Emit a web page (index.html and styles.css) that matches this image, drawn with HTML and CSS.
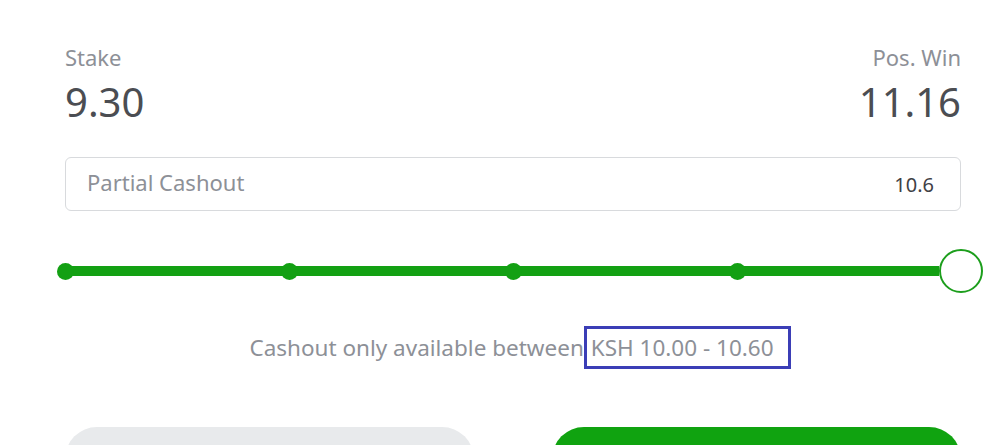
FILE: index.html
```
<!DOCTYPE html>
<html lang="en">

<head>
    <meta charset="UTF-8">
    <title>Partial Cashout</title>
    <link rel="stylesheet" href="styles.css">
</head>

<body>
    <div class="cashout">
        <div class="summary">
            <div class="col">
                <div class="label">Stake</div>
                <div class="amount">9.30</div>
            </div>
            <div class="col right">
                <div class="label">Pos. Win</div>
                <div class="amount">11.16</div>
            </div>
        </div>

        <div class="field">
            <span class="placeholder">Partial Cashout</span>
            <span class="value">10.6</span>
        </div>

        <div class="slider">
            <span class="stop"><i class="dot"></i></span>
            <span class="stop"><i class="dot"></i></span>
            <span class="stop"><i class="dot"></i></span>
            <span class="stop"><i class="dot"></i></span>
            <span class="stop"><i class="handle"></i></span>
        </div>

        <p class="hint">Cashout only available between<span class="range"> KSH 10.00 - 10.60</span></p>

        <div class="actions">
            <button class="btn cancel"></button>
            <button class="btn confirm"></button>
        </div>
    </div>
</body>
</html>
```

FILE: styles.css
```
* {
    padding: 0;
    margin: 0;
    box-sizing: border-box;
}

body {
    background: #fff;
    font-family: "Noto Sans", "Open Sans", sans-serif;
    overflow: hidden;
}

.cashout {
    width: 896px;
    margin-left: 65px;
    padding-top: 40px;
}

.summary {
    display: flex;
    justify-content: space-between;
}

.col.right {
    text-align: right;
}

.label {
    font-size: 22px;
    line-height: 34px;
    color: #8d9097;
}

.amount {
    font-size: 40px;
    line-height: 56px;
    color: #4b4d52;
}

.field {
    margin-top: 27px;
    height: 54px;
    border: 1px solid #d8dadd;
    border-radius: 6px;
    display: flex;
    justify-content: space-between;
    align-items: center;
    padding: 0 26px 4px 21px;
}

.placeholder {
    font-size: 22px;
    color: #8d9097;
}

.value {
    font-size: 20px;
    color: #3f4146;
    padding-top: 4px;
}

.slider {
    margin-top: 38px;
    height: 44px;
    display: flex;
    justify-content: space-between;
    align-items: center;
    background: linear-gradient(#13a013, #13a013) no-repeat left center / calc(100% - 22px) 10px;
}

.stop {
    width: 0;
    display: flex;
    justify-content: center;
}

.dot {
    flex: none;
    width: 17px;
    height: 17px;
    border-radius: 50%;
    background: #13a013;
}

.handle {
    flex: none;
    width: 44px;
    height: 44px;
    border-radius: 50%;
    background: #fff;
    border: 2px solid #1c9e1c;
}

.hint {
    margin-top: 33px;
    padding-left: 14px;
    text-align: center;
    font-size: 22.5px;
    line-height: 39px;
    color: #8d9097;
}

.range {
    display: inline-block;
    border: 3px solid #3b3eb6;
    padding: 2px 14px 2px 4px;
    line-height: 33px;
}

.actions {
    margin-top: 58px;
    display: grid;
    grid-template-columns: 409px 409px;
    justify-content: space-between;
}

.btn {
    height: 64px;
    border: 0;
    border-radius: 32px;
}

.cancel {
    background: #e8eaec;
}

.confirm {
    background: #10a310;
}
```
